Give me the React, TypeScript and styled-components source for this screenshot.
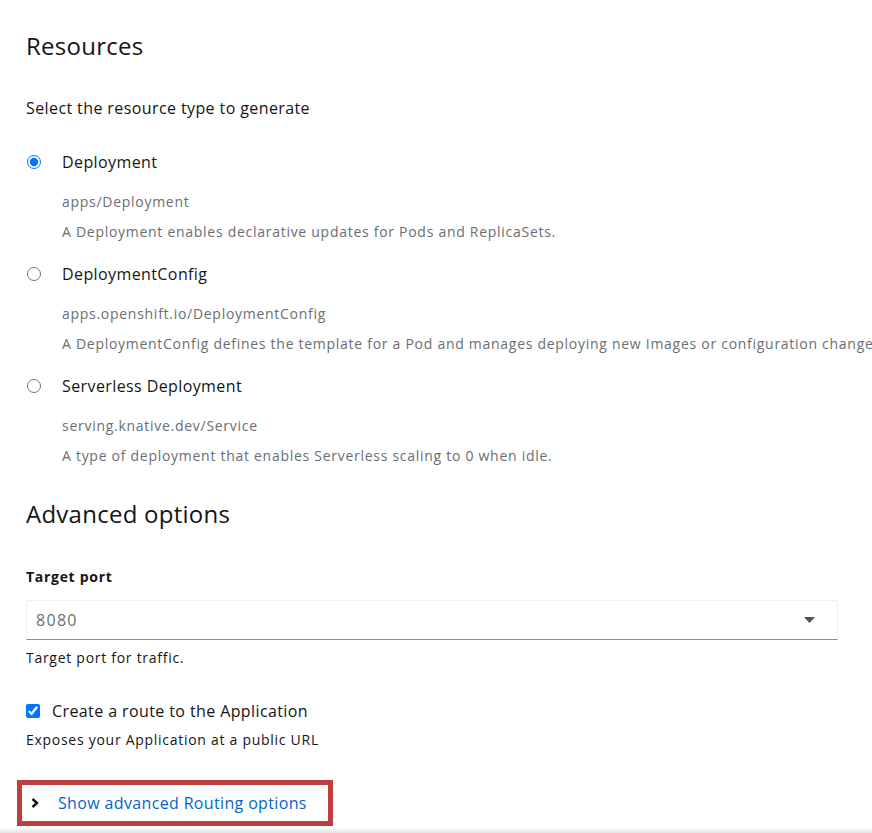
import React from 'react';
import styled, { createGlobalStyle } from 'styled-components';

const Global = createGlobalStyle`
  html, body { margin: 0; padding: 0; background: #fff; }
  body {
    font-family: "Open Sans", "Liberation Sans", sans-serif;
    color: #151515;
    overflow: hidden;
  }
`;

const Page = styled.div`
  padding: 30px 0 0 26px;
  width: 872px;
  height: 833px;
  box-sizing: border-box;
  overflow: hidden;
  display: flex;
  flex-direction: column;
  align-items: flex-start;
`;

const Heading = styled.h2<{ $top?: number }>`
  margin: ${(p) => p.$top ?? 0}px 0 0;
  font-size: 24px;
  line-height: 32px;
  font-weight: 400;
  letter-spacing: 0.25px;
  color: #151515;
`;

const Lead = styled.p`
  margin: 34px 0 0;
  font-size: 16px;
  line-height: 24px;
  letter-spacing: 0.4px;
`;

const RadioGroup = styled.div`
  margin-top: 30px;
  display: flex;
  flex-direction: column;
  gap: 20px;
  width: 100%;
`;

const Option = styled.div`
  display: flex;
  flex-direction: column;
`;

const ControlRow = styled.label`
  display: flex;
  align-items: center;
  height: 24px;
  font-size: 16px;
  line-height: 24px;
  letter-spacing: 0.4px;
  cursor: pointer;
`;

const Radio = styled.input.attrs({ type: 'radio' })`
  margin: 0 0 0 1px;
  width: 14px;
  height: 14px;
`;

const Checkbox = styled.input.attrs({ type: 'checkbox' })`
  margin: 0;
  width: 14px;
  height: 14px;
`;

const ControlLabel = styled.span<{ $gap: number }>`
  margin-left: ${(p) => p.$gap}px;
`;

const Sub = styled.div<{ $top: number; $indent?: number }>`
  margin: ${(p) => p.$top}px 0 0 ${(p) => p.$indent ?? 0}px;
  font-size: 14px;
  line-height: 21px;
  letter-spacing: 0.72px;
  color: #6a6e73;
  white-space: nowrap;
`;

const FieldLabel = styled.div`
  margin-top: 36px;
  font-size: 14px;
  line-height: 21px;
  font-weight: 700;
  letter-spacing: 0.7px;
`;

const Select = styled.div`
  margin-top: 13px;
  width: 812px;
  height: 40px;
  box-sizing: border-box;
  border: 1px solid #f0f0f0;
  border-bottom-color: #8a8d90;
  display: flex;
  align-items: center;
  justify-content: space-between;
  padding: 0 22px 0 9px;
  font-size: 16px;
  letter-spacing: 1.3px;
  color: #6a6e73;
`;

const Helper = styled.div<{ $top: number }>`
  margin-top: ${(p) => p.$top}px;
  font-size: 14px;
  line-height: 21px;
  letter-spacing: 0.72px;
  color: #151515;
`;

const CheckRow = styled(ControlRow)`
  margin-top: 31px;
`;

const Outline = styled.div`
  margin: 30px 0 0 -9px;
  border: 5px solid #be3d3f;
  height: 46px;
  box-sizing: border-box;
  display: inline-flex;
  align-items: center;
  padding: 0 21px 0 9px;
`;

const Toggle = styled.button`
  border: 0;
  background: none;
  padding: 0;
  display: flex;
  align-items: center;
  gap: 19px;
  font-family: inherit;
  font-size: 16px;
  line-height: 24px;
  letter-spacing: 0.35px;
  color: #0066cc;
  cursor: pointer;
`;

const Shadow = styled.div`
  margin: 1px 0 0 -26px;
  width: 872px;
  height: 6px;
  background: linear-gradient(to bottom, #ffffff, #e4e4e4);
`;

const options = [
  {
    label: 'Deployment',
    kind: 'apps/Deployment',
    desc: 'A Deployment enables declarative updates for Pods and ReplicaSets.',
    checked: true,
  },
  {
    label: 'DeploymentConfig',
    kind: 'apps.openshift.io/DeploymentConfig',
    desc: 'A DeploymentConfig defines the template for a Pod and manages deploying new Images or configuration changes.',
    checked: false,
  },
  {
    label: 'Serverless Deployment',
    kind: 'serving.knative.dev/Service',
    desc: 'A type of deployment that enables Serverless scaling to 0 when idle.',
    checked: false,
  },
];

const Caret = () => (
  <svg width="11" height="6" viewBox="0 0 11 6">
    <path d="M0 0 L11 0 L5.5 6 Z" fill="#4f5255" />
  </svg>
);

const Chevron = () => (
  <svg width="8" height="10" viewBox="0 0 8 10">
    <path d="M1.5 1 L6 5 L1.5 9" fill="none" stroke="#151515" strokeWidth="2.4" />
  </svg>
);

export default function App() {
  return (
    <>
      <Global />
      <Page>
        <Heading>Resources</Heading>
        <Lead>Select the resource type to generate</Lead>
        <RadioGroup>
          {options.map((o) => (
            <Option key={o.label}>
              <ControlRow>
                <Radio name="resource" defaultChecked={o.checked} />
                <ControlLabel $gap={21}>{o.label}</ControlLabel>
              </ControlRow>
              <Sub $top={17} $indent={36}>{o.kind}</Sub>
              <Sub $top={9} $indent={36}>{o.desc}</Sub>
            </Option>
          ))}
        </RadioGroup>
        <Heading $top={32}>Advanced options</Heading>
        <FieldLabel>Target port</FieldLabel>
        <Select>
          <span>8080</span>
          <Caret />
        </Select>
        <Helper $top={7}>Target port for traffic.</Helper>
        <CheckRow>
          <Checkbox defaultChecked />
          <ControlLabel $gap={12}>Create a route to the Application</ControlLabel>
        </CheckRow>
        <Helper $top={6}>Exposes your Application at a public URL</Helper>
        <Outline>
          <Toggle>
            <Chevron />
            Show advanced Routing options
          </Toggle>
        </Outline>
        <Shadow />
      </Page>
    </>
  );
}
